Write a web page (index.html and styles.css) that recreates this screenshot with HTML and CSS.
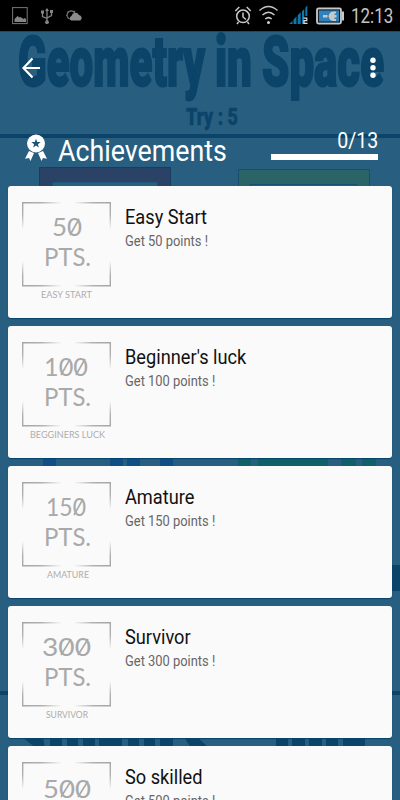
FILE: index.html
```html
<!DOCTYPE html>
<html lang="en">
<head>
<meta charset="utf-8">
<title>Achievements</title>
<link rel="stylesheet" href="styles.css">
</head>
<body>
<svg class="backdrop" width="400" height="800" viewBox="0 0 400 800" aria-hidden="true">
  <g class="game-title">
    <text x="18" y="86" textLength="187" lengthAdjust="spacingAndGlyphs">Geometry</text>
    <text x="215" y="86" textLength="37" lengthAdjust="spacingAndGlyphs">in</text>
    <text x="262" y="86" textLength="122" lengthAdjust="spacingAndGlyphs">Space</text>
  </g>
  <text class="game-try" x="186" y="125" textLength="52" lengthAdjust="spacingAndGlyphs">Try : 5</text>
  <path fill="#0b4468" d="M0 134h400v4H0zM0 691h400v4H0zM392 565h8v26h-8z"/>
  <path fill="#2a4265" stroke="#173d62" d="M39.500 167.500h131v30h-131z"/>
  <path fill="#28607f" stroke="#174f75" d="M52.500 182h105v16h-105z"/>
  <path fill="#2a6467" stroke="#14506b" d="M238.500 169.500h131v30h-131z"/>
  <path fill="#285d80" stroke="#174f75" d="M250 184.500h107v16H250z"/>
  <path fill="#114e86" d="M43 456h13v12H43zM110 456h13v12h-13zM127 456h13v12h-13zM160 456h13v12h-13z"/>
  <path fill="#10606a" d="M238 456h13v12h-13zM258 456h70v12h-70zM341 456h15v12h-15zM362 456h14v12h-14z"/>
  <path fill="#0b4468" d="M22 737h21l2 11H36zM50 737h12v11H50zM67 737h11v11H67zM83 737h12v11H83zM99 737h23v11H99zM128 737h11v11h-11zM144 737h11v11h-11zM160 737h13v11h-13zM184 737h13l12 11h-18zM276 737h12v11h-12zM292 737h13v11h-13zM309 737h13v11h-13zM326 737h12v11h-12zM343 737h22v11h-22z"/>
</svg>

<div class="screen">
  <header class="status">
    <svg class="status-left" width="90" height="32" viewBox="0 0 90 32">
      <rect x="12.600" y="7.600" width="14.600" height="16" fill="none" stroke="#777" />
      <path fill="#858585" d="M14.500 22v-3l3-3 2 1.500 1-.5 3 2 1-1 1.500 1V22z"/>
      <g fill="none" stroke="#858585" stroke-width="1.300"><path d="M47 9v13M42.500 13v3.500l4.500 2M51.500 12.500v3L47 18"/></g>
      <path fill="#858585" d="M45 11l2-3 2 3zM41 10.500h3v3h-3zM50 10h3v3h-3z"/><circle cx="47" cy="22.200" r="1.900" fill="#858585"/>
      <path fill="none" stroke="#707070" stroke-width="1.200" d="M71 19a4 4 0 1 1 4-5M66 15.500h1.500M67.500 11.500l1 1M71 10v1.500M75 11l-1 1"/>
      <path fill="#8c8c8c" d="M71 20.500a2.500 2.500 0 0 1 .5-4.500 4 4 0 0 1 7.500-1 3 3 0 0 1 1.300 5.500z"/>
    </svg>
    <svg class="status-right" width="112" height="32" viewBox="233 0 112 32">
      <g fill="none" stroke="#c8c8c8" stroke-width="1.500"><circle cx="243" cy="16.300" r="6.300"/><path d="M243 12.500v4.500l3 2.500M235.300 11l4-4M250.700 11l-4-4M238.500 22l-1.500 2M247.500 22l1.500 2"/>
      <path d="M259.500 10.500q9-8 18 0M262.500 15q6-5.500 12 0M265.300 19q3.300-2.800 6.400 0"/></g><circle cx="268.500" cy="22.500" r="1.500" fill="#d0d0d0"/>
      <path fill="#0e78ad" d="M289 24l3.500-3v3zM293.500 24v-4.500l3-3V24zM297.700 24v-8.700l3-3V24zM302 24V11.500l2.200-2.500v15zM305.300 16V7.800l2-2.300V16z"/>
      <path fill="none" stroke="#ddd" stroke-width="1.200" d="M303.500 18.200h3.300v2.500h-2.800v2.600h3.500"/>
      <rect x="317" y="8.500" width="24" height="15" rx="1.500" fill="#3181bd" stroke="#c8c8c8" stroke-width="1.800"/><rect x="318.500" y="10" width="21" height="12" fill="none" stroke="#10202c"/><path fill="#c8c8c8" d="M342 11.500h2v9h-2zM323 15h4.500v2.500H323zM328.500 16.300q1-4.800 5-4.800h2.500v2h-1.500v1.500h2v2.500h-2v1.500h1.500v2h-2.500q-4 0-5-4.700"/>
    </svg>
    <span class="clock">12:13</span>
  </header>

  <nav class="toolbar">
    <svg width="20" height="22" viewBox="0 0 20 22"><path fill="none" stroke="#fff" stroke-width="2.200" d="M19 11H2.500M11.500 1.500l-9 9.500 9 9.500"/></svg>
    <svg width="6" height="24" viewBox="0 0 6 24" fill="#fff"><circle cx="3" cy="4.300" r="2.700"/><circle cx="3" cy="11.700" r="2.700"/><circle cx="3" cy="19.200" r="2.700"/></svg>
  </nav>

  <section class="summary">
    <svg class="medal" width="22" height="28" viewBox="0 0 22 28"><path fill="#fff" d="M4 17l5 2-3.500 8-1.500-3-4 .8zM18 17l-5 2 3.500 8 1.500-3 4 .8z"/><circle cx="11" cy="9.500" r="9" fill="#fff"/><path fill="#19567a" d="M11 4.800l1.200 3.200 3.500.1-2.800 2.100 1 3.400-2.900-2-2.900 2 1-3.400-2.800-2.100 3.500-.1z"/></svg>
    <h1><span>Achievements</span></h1>
    <div class="progress"><span class="count">0/13</span><div class="bar"></div></div>
  </section>

  <svg width="0" height="0" class="defs">
    <defs>
      <linearGradient id="fade-h"><stop offset="0" stop-color="#a5a5a5"/><stop offset=".22" stop-color="#b0b0b0"/><stop offset=".45" stop-color="#b0b0b0" stop-opacity="0"/><stop offset=".58" stop-color="#b0b0b0" stop-opacity="0"/><stop offset=".8" stop-color="#b0b0b0"/><stop offset="1" stop-color="#a5a5a5"/></linearGradient>
      <linearGradient id="fade-v" x2="0" y2="1"><stop offset="0" stop-color="#a5a5a5"/><stop offset=".15" stop-color="#b0b0b0"/><stop offset=".33" stop-color="#b0b0b0" stop-opacity="0"/><stop offset=".7" stop-color="#b0b0b0" stop-opacity="0"/><stop offset=".87" stop-color="#b0b0b0"/><stop offset="1" stop-color="#a5a5a5"/></linearGradient>
      <g id="frame"><path fill="url(#fade-h)" d="M0 0h89v1.400H0z"/><path fill="url(#fade-h)" d="M0 83h89v1.400H0z"/><path fill="url(#fade-v)" d="M0 0h1.400v84H0z"/><path fill="url(#fade-v)" d="M87.600 0H89v84h-1.400z"/></g>
    </defs>
  </svg>

  <main class="list">
    <article class="card">
      <svg class="badge" width="90" height="100" viewBox="0 0 90 100"><use href="#frame"/>
        <text class="num" x="30" y="34" textLength="30" lengthAdjust="spacingAndGlyphs">50</text><path class="slash" d="M48 33l9-16"/>
        <text class="pts" x="22" y="64" textLength="47" lengthAdjust="spacingAndGlyphs">PTS.</text>
        <text class="cap" x="19" y="96" textLength="51" lengthAdjust="spacingAndGlyphs">EASY START</text></svg>
      <div class="info"><h2>Easy Start</h2><p>Get 50 points !</p></div>
    </article>
    <article class="card">
      <svg class="badge" width="90" height="100" viewBox="0 0 90 100"><use href="#frame"/>
        <text class="num" x="22" y="34" textLength="44" lengthAdjust="spacingAndGlyphs">100</text><path class="slash" d="M39 33l9-16M54 33l9-16"/>
        <text class="pts" x="22" y="64" textLength="47" lengthAdjust="spacingAndGlyphs">PTS.</text>
        <text class="cap" x="8" y="96" textLength="75" lengthAdjust="spacingAndGlyphs">BEGGINERS LUCK</text></svg>
      <div class="info"><h2>Beginner's luck</h2><p>Get 100 points !</p></div>
    </article>
    <article class="card">
      <svg class="badge" width="90" height="100" viewBox="0 0 90 100"><use href="#frame"/>
        <text class="num" x="24" y="34" textLength="40" lengthAdjust="spacingAndGlyphs">150</text><path class="slash" d="M52 33l9-16"/>
        <text class="pts" x="22" y="64" textLength="47" lengthAdjust="spacingAndGlyphs">PTS.</text>
        <text class="cap" x="25" y="96" textLength="42" lengthAdjust="spacingAndGlyphs">AMATURE</text></svg>
      <div class="info"><h2>Amature</h2><p>Get 150 points !</p></div>
    </article>
    <article class="card">
      <svg class="badge" width="90" height="100" viewBox="0 0 90 100"><use href="#frame"/>
        <text class="num" x="20" y="34" textLength="49" lengthAdjust="spacingAndGlyphs">300</text><path class="slash" d="M39 33l10-16M56 33l10-16"/>
        <text class="pts" x="22" y="64" textLength="47" lengthAdjust="spacingAndGlyphs">PTS.</text>
        <text class="cap" x="24" y="96" textLength="42" lengthAdjust="spacingAndGlyphs">SURVIVOR</text></svg>
      <div class="info"><h2>Survivor</h2><p>Get 300 points !</p></div>
    </article>
    <article class="card">
      <svg class="badge" width="90" height="100" viewBox="0 0 90 100"><use href="#frame"/>
        <text class="num" x="21" y="36" textLength="48" lengthAdjust="spacingAndGlyphs">500</text><path class="slash" d="M39 35l10-16M56 35l10-16"/></svg>
      <div class="info"><h2>So skilled</h2><p>Get 500 points !</p></div>
    </article>
  </main>
</div>
</body>
</html>
```
FILE: styles.css
```css
* { box-sizing: border-box; }
html, body { height: 800px; overflow: hidden; }
body { margin: 0; background: #285f80; font-family: Roboto, sans-serif; }
h1, h2, p { margin: 0; font-weight: 400; }

.backdrop { position: absolute; top: 0; left: 0; }
.game-title, .game-try { fill: #0b4468; stroke: #0b4468; font-family: Roboto, sans-serif; font-weight: 900; }
.game-title { font-size: 70px; stroke-width: 2px; }
.game-try { font-size: 24px; stroke-width: .5px; }

.screen { position: relative; height: 800px; overflow: hidden; }
.status { display: flex; height: 32px; background: #000; border-bottom: 1px solid #0d4d73; }
.status svg { display: block; }
.status-right { margin-left: 143px; }
.clock { width: 48px; margin-left: 6px; font-size: 19.500px; line-height: 34px; color: #c4c4c4; white-space: nowrap; transform: scaleX(.87); transform-origin: left; }

.toolbar { display: flex; justify-content: space-between; align-items: center; height: 72px; padding: 0 24px 0 21px; }
.summary { display: flex; height: 82px; padding: 30px 22px 0 25px; }
.medal { display: block; }
.summary h1 { flex: 1; margin: -1px 0 0 11px; font-size: 30px; line-height: 36px; color: #fff; }
.summary h1 span { display: inline-block; transform: scaleX(.893); transform-origin: left; }
.progress { width: 107px; display: flex; flex-direction: column; align-items: flex-end; margin-top: -7px; }
.count { font-size: 22.500px; line-height: 27px; color: #fff; transform: scaleX(.87); transform-origin: right; }
.bar { width: 107px; height: 6px; background: #fff; }
.defs { position: absolute; }

.list { display: flex; flex-direction: column; gap: 8px; padding: 0 8px; }
.card { display: flex; flex: none; height: 132px; padding: 16px 14px; border-radius: 3px; background: #fafafa; box-shadow: 0 1px 1px #06446c; }
.badge { flex: none; display: block; }
.info { padding: 2px 0 0 12.500px; white-space: nowrap; }
.info h2, .info p { transform-origin: left; }
.info h2 { font-size: 20px; line-height: 26px; color: #111; transform: scaleX(.91); }
.info p { margin-top: 1px; font-size: 15px; line-height: 20px; color: #666; transform: scaleX(.86); }

.num, .pts, .cap { fill: #a9a9a9; font-family: Lato, sans-serif; }
.num { font-size: 25px; }
.pts { font-size: 25px; }
.cap { font-size: 10px; fill: #adadad; }
.slash { fill: none; stroke: #a9a9a9; stroke-width: 1.600px; }
```
